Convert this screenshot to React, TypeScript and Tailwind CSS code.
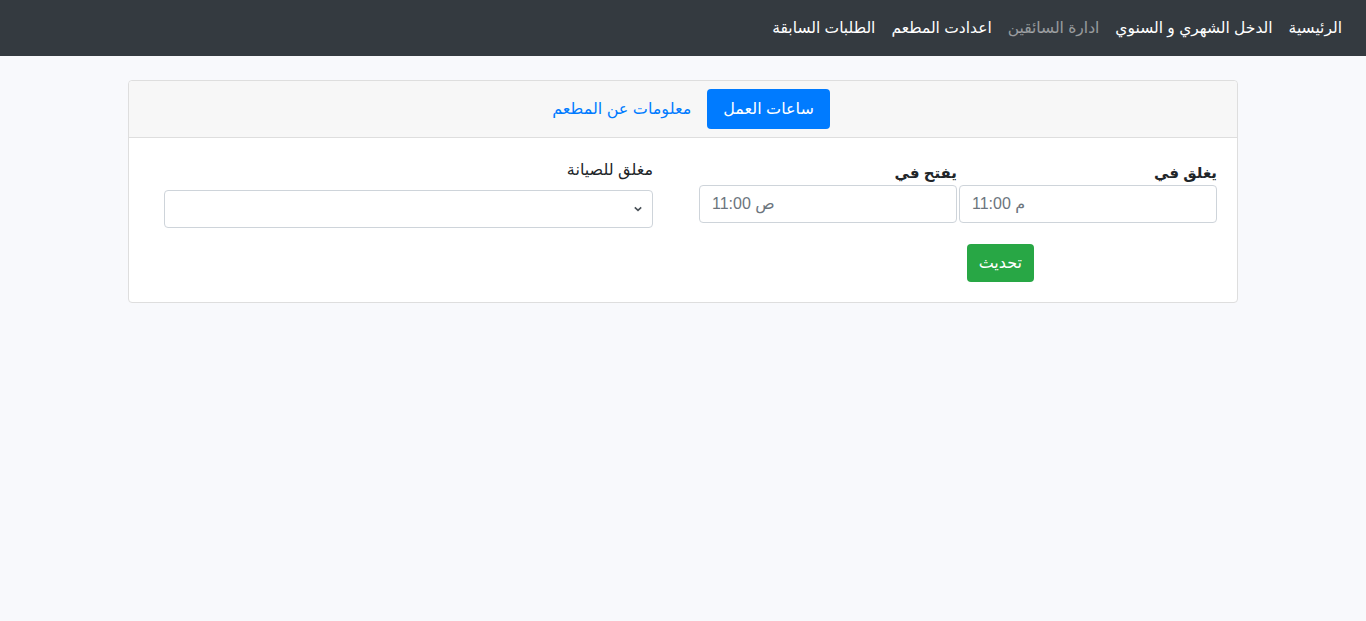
import React from "react";

const navItems = [
  { label: "الرئيسية", active: true },
  { label: "الدخل الشهري و السنوي", active: true },
  { label: "ادارة السائقين", active: false },
  { label: "اعدادت المطعم", active: true },
  { label: "الطلبات السابقة", active: true },
];

function TimeField({ label, value }: { label: string; value: string }) {
  return (
    <div className="flex flex-1 flex-col">
      <label className="font-bold text-[15px] leading-6 text-[#212529]">{label}</label>
      <div
        dir="ltr"
        className="h-[38px] bg-white border border-[#ced4da] rounded-[4px] px-3 flex items-center text-[16px] text-[#6c757d]"
      >
        {value}
      </div>
    </div>
  );
}

export default function App() {
  return (
    <div
      dir="rtl"
      className="min-h-[621px] bg-[#f8f9fc] text-[#212529]"
      style={{ fontFamily: '"Liberation Sans", "DejaVu Sans", sans-serif' }}
    >
      {/* navbar */}
      <nav className="h-14 bg-[#343a40] px-4 flex items-center">
        <ul className="flex items-center">
          {navItems.map((item) => (
            <li
              key={item.label}
              className={
                "px-2 text-[15.5px] leading-6 " +
                (item.active ? "text-white" : "text-white/50")
              }
            >
              {item.label}
            </li>
          ))}
        </ul>
      </nav>

      <div className="w-[1110px] mx-auto mt-6">
        <div className="bg-white border border-[#dedede] rounded-[4px]">
          {/* tabs */}
          <div className="bg-[#f7f7f7] border-b border-[#dedede] rounded-t-[4px] py-2 flex justify-center">
            <div className="flex">
              <div className="h-10 px-4 flex items-center bg-[#007bff] text-white rounded-[4px] text-[16px]">
                ساعات العمل
              </div>
              <div className="h-10 px-4 flex items-center text-[#007bff] text-[16px]">
                معلومات عن المطعم
              </div>
            </div>
          </div>

          {/* body */}
          <div className="px-5 pt-[23px] pb-5 flex">
            <div className="w-[518px] flex flex-col">
              <div className="flex gap-[2px]">
                <TimeField label="يغلق في" value="11:00 م" />
                <TimeField label="يفتح في" value="11:00 ص" />
              </div>
              <div className="mt-[21px] mr-[183px] flex">
                <button className="h-[38px] px-3 bg-[#28a745] text-white rounded-[4px] text-[16px]">
                  تحديث
                </button>
              </div>
            </div>

            <div className="w-[489px] mr-[46px] -mt-[3px] flex flex-col">
              <label className="text-[16px] leading-6 mb-2">مغلق للصيانة</label>
              <div className="h-[38px] bg-white border border-[#ced4da] rounded-[4px] flex items-center justify-start pr-[9px]">
                <svg width="10" height="8" viewBox="0 0 10 8" className="text-[#495057]">
                  <path d="M1.8 2.4 L5 5.4 L8.2 2.4" fill="none" stroke="currentColor" strokeWidth="1.6" />
                </svg>
              </div>
            </div>
          </div>
        </div>
      </div>
    </div>
  );
}
